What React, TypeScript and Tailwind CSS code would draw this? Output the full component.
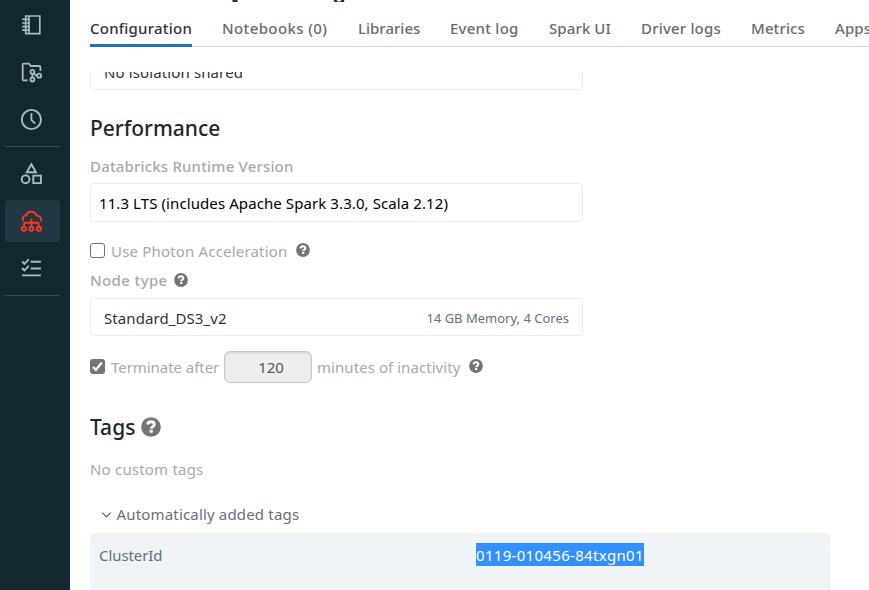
import type { ReactNode } from "react";

function NavItem({ active, children }: { active?: boolean; children: ReactNode }) {
  return (
    <div
      className={
        active
          ? "flex h-[42px] w-[55px] items-center justify-center rounded bg-[#22373f] pr-[3px] text-[#ff3621]"
          : "flex h-[42px] w-[55px] items-center justify-center pr-[3px] text-[#a9bbc2]"
      }
    >
      <svg viewBox="-0.4 0 24 24" className="size-6 fill-none stroke-current" strokeWidth={1.9}>
        {children}
      </svg>
    </div>
  );
}

function Help({ large }: { large?: boolean }) {
  return (
    <svg viewBox="0 0 14 14" className={large ? "size-5 shrink-0" : "size-3.5 shrink-0"}>
      <circle cx="7" cy="7" r="6.9" fill="#757575" />
      <path d="M4.6 5.3C4.8 3.9 5.8 3.3 7 3.3c1.3 0 2.3.7 2.3 1.9 0 1.5-2.1 1.5-2.1 3" fill="none" stroke="#fff" strokeWidth="2" />
      <rect x="6.1" y="9" width="2.1" height="2" fill="#fff" />
    </svg>
  );
}

const tabs = [
  { label: "Notebooks (0)", style: "w-[106px] tracking-[0.38px]" },
  { label: "Libraries", style: "w-[62px]" },
  { label: "Event log", style: "w-[69px] tracking-[0.24px]" },
  { label: "Spark UI", style: "w-[62px] tracking-[0.1px]" },
  { label: "Driver logs", style: "w-[80px] tracking-[0.18px]" },
  { label: "Metrics", style: "w-[54px] tracking-[0.12px]" },
  { label: "Apps", style: "w-[40px] tracking-[0.1px]" },
];

export default function App() {
  return (
    <div className="flex h-[590px] w-[869px] overflow-hidden bg-white font-['Noto_Sans','Open_Sans',sans-serif] text-[15px] leading-5 whitespace-nowrap">
      <nav className="flex w-[70px] shrink-0 flex-col bg-[#13272e] pl-[5px]">
        <div className="mr-[10px] flex flex-col gap-[5px] border-b border-[#3b4d54] pt-[5px] pb-[5px]">
          <NavItem>
            <path d="M6.3 2h14.1v17.6H6.3zM9.6 2v17.6M2.8 5.4h6.4M2.8 9h6.4M2.8 12.6h6.4M2.8 16.2h6.4" strokeWidth={1.7} />
          </NavItem>
          <NavItem>
            <path d="M8.2 19.4H4.8q-1.5 0-1.5-1.5V4q0-1.4 1.3-1.4h4.9l2 2.4h8.2q1.3 0 1.3 1.3v3.6" strokeWidth={1.8} />
            <g strokeWidth={1.8}>
              <circle cx="13" cy="10.8" r="2" />
              <circle cx="13" cy="18.5" r="2" />
              <circle cx="19.8" cy="14.7" r="2" />
              <path d="M13 12.8v3.7M14.5 12.3q1.2 2.2 3.3 2.4" />
            </g>
          </NavItem>
          <NavItem>
            <circle cx="12" cy="11.5" r="9.6" />
            <path d="M12 5.3v6.5l3.8 3.8" />
          </NavItem>
        </div>
        <div className="mr-[10px] flex flex-col gap-[5px] border-b border-[#3b4d54] pt-[6px] pb-[6px]">
          <NavItem>
            <path d="M12 2.2 16.6 10.3H7.4zM13.9 13.6h7.6v7.5h-7.6z" />
            <circle cx="6.2" cy="17.3" r="3.9" />
          </NavItem>
          <NavItem active>
            <path d="M3.5 12.3V9.6q0-2.8 3.2-3.2Q8.2 2.8 12 2.8q3.6 0 5.2 3.8 4.3.2 4.3 3.6v2.1M12 9.5v8M4.7 17.5v-2.7q0-1.1 1.1-1.1h12.4q1.1 0 1.1 1.1v2.7" />
            <circle cx="4.5" cy="19.8" r="2.1" />
            <circle cx="12" cy="19.8" r="2.1" />
            <circle cx="19.5" cy="19.8" r="2.1" />
          </NavItem>
          <NavItem>
            <path d="m2.7 5.4 2.3 2.4 4.4-4.5M2.7 12l2.3 2.4 4.4-4.5M11.3 5.7h10.2M11.3 12.5h10.2M2.6 19.4h18.9" />
          </NavItem>
        </div>
      </nav>

      <main className="flex min-w-0 flex-1 flex-col pl-5">
        <header className="flex h-[47px] shrink-0 flex-col border-b border-[#d9d9d9]">
          <div className="flex h-[2px] shrink-0 items-end gap-[92px] overflow-hidden pl-[139px] text-[21px] leading-[12px] font-semibold text-[#1f272d]">
            <span>y</span>
            <span>g</span>
          </div>
          <div className="flex h-[45px] shrink-0 gap-[30px] pt-[16px] font-medium text-[#6b6b6b]">
            <div className="h-[29px] w-[102px] shrink-0 border-b-[3px] border-[#2272b9] tracking-[0.22px] text-[#333]">
              Configuration
            </div>
            {tabs.map((tab) => (
              <div key={tab.label} className={"shrink-0 " + tab.style}>
                {tab.label}
              </div>
            ))}
          </div>
        </header>

        <div className="mt-[25px] flex flex-1 flex-col overflow-hidden">
          <div className="-mt-[18px] flex h-9 w-[493px] shrink-0 items-center rounded border border-[#ebebeb] pl-[13px] tracking-[0.12px] text-[#333]">
            No isolation shared
          </div>
          <h2 className="mt-6 h-7 text-[21px] leading-7 font-medium text-[#1f272d]">Performance</h2>
          <div className="mt-[14px] font-medium tracking-[0.17px] text-[#a9a9a9]">Databricks Runtime Version</div>
          <div className="mt-[7px] flex h-[39px] w-[493px] shrink-0 items-center rounded border border-[#ebebeb] pt-px pl-2 tracking-[0.09px] text-black">
            11.3 LTS (includes Apache Spark 3.3.0, Scala 2.12)
          </div>
          <div className="mt-[19px] flex items-start text-[#a9a9a9]">
            <span className="mt-[2px] mr-1.5 size-[15px] rounded-[3px] border-[1.5px] border-[#6f6f6f]" />
            <span className="w-[185px] tracking-[0.18px]">Use Photon Acceleration</span>
            <span className="pt-[2px]">
              <Help />
            </span>
          </div>
          <div className="mt-[9px] flex items-center text-[#a9a9a9]">
            <span className="w-[84px] font-medium tracking-[0.38px]">Node type</span>
            <Help />
          </div>
          <div className="mt-2 flex h-[38px] w-[493px] shrink-0 items-center justify-between rounded border border-[#ebebeb] pt-px pr-[13px] pl-[13px]">
            <span className="tracking-[0.08px] text-[#333]">Standard_DS3_v2</span>
            <span className="text-[13px] text-[#5f7281]">14 GB Memory, 4 Cores</span>
          </div>
          <div className="mt-[15px] flex h-8 shrink-0 items-start text-[#a9a9a9]">
            <span className="mt-2 mr-1.5 flex size-[15px] items-center justify-center rounded-[3px] bg-[#757575]">
              <svg viewBox="0 0 15 15" className="size-[15px] fill-none stroke-white" strokeWidth={2.2}>
                <path d="m3.1 8 2.8 2.9 5.9-7.4" />
              </svg>
            </span>
            <span className="w-[113px] pt-1.5 tracking-[-0.05px]">Terminate after</span>
            <span className="flex h-8 w-[88px] items-center justify-center rounded-md border border-[#c8c8c8] bg-[#eee] pl-[6px] text-[#555] shadow-[inset_0_1px_2px_rgba(0,0,0,0.1)]">
              120
            </span>
            <span className="ml-[5px] w-[152px] pt-1.5 tracking-[0.06px]">minutes of inactivity</span>
            <span className="pt-2">
              <Help />
            </span>
          </div>
          <div className="mt-[30px] flex h-7 items-center">
            <h2 className="w-[51px] text-[21px] leading-7 font-medium text-[#1f272d]">Tags</h2>
            <Help large />
          </div>
          <div className="mt-[18px] tracking-[0.2px] text-[#a9a9a9]">No custom tags</div>
          <div className="mt-[25px] flex items-center pl-[11px] text-[#5f7281]">
            <svg viewBox="0 0 11 11" className="mr-[4.5px] size-[11px] fill-none stroke-current" strokeWidth={1.3}>
              <path d="m1.2 3.6 4.3 4.2 4.3-4.2" />
            </svg>
            <span className="tracking-[0.17px]">Automatically added tags</span>
          </div>
          <div className="mt-[9px] grid h-20 w-[740px] shrink-0 grid-cols-[377px_1fr] items-start rounded-t bg-[#f0f4f7] pt-2.5 pl-[9px] text-[#5f7281]">
            <span className="pt-[2px] tracking-[-0.08px]">ClusterId</span>
            <span className="h-[23px] w-[168px] bg-[#3390ff] pt-[2px] tracking-[0.31px] text-white">0119-010456-84txgn01</span>
          </div>
        </div>
      </main>
    </div>
  );
}
